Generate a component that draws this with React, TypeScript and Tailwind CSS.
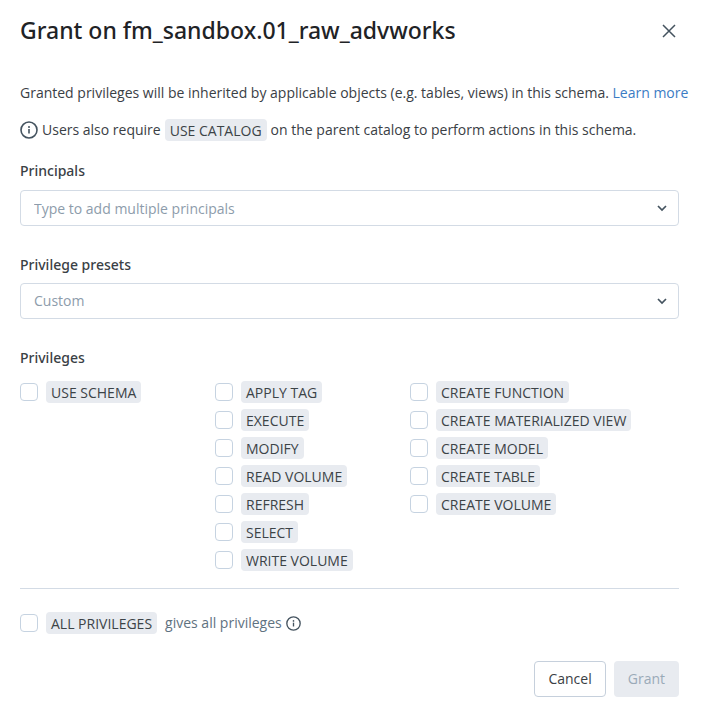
import { useState } from "react";
import type { ReactNode } from "react";

const COLUMNS: string[][] = [
  ["USE SCHEMA"],
  ["APPLY TAG", "EXECUTE", "MODIFY", "READ VOLUME", "REFRESH", "SELECT", "WRITE VOLUME"],
  ["CREATE FUNCTION", "CREATE MATERIALIZED VIEW", "CREATE MODEL", "CREATE TABLE", "CREATE VOLUME"],
];

function InfoIcon({ className }: { className: string }) {
  return (
    <svg viewBox="0 0 18 18" fill="none" className={className} aria-hidden="true">
      <circle cx="9" cy="9" r="8" stroke="currentColor" strokeWidth="1.6" />
      <path d="M9 8v4.6" stroke="currentColor" strokeWidth="1.6" />
      <circle cx="9" cy="5.9" r="1" fill="currentColor" />
    </svg>
  );
}

function ChevronIcon() {
  return (
    <svg viewBox="0 0 10 10" fill="none" className="size-[10px]" aria-hidden="true">
      <path d="M1 3l4 4 4-4" stroke="currentColor" strokeWidth="1.7" />
    </svg>
  );
}

function Tag({ children }: { children: ReactNode }) {
  return (
    <span className="inline-block h-[22px] rounded-[4px] bg-[#e8ebf0] px-[5px] leading-6 whitespace-nowrap text-[#3c4347]">
      {children}
    </span>
  );
}

function Privilege({ name, children }: { name: string; children?: ReactNode }) {
  return (
    <label className="flex h-[22px] items-center gap-2">
      <input
        type="checkbox"
        className="size-[18px] shrink-0 appearance-none rounded-[4px] border border-[#c6d3e1] bg-white checked:bg-[#2272b4]"
      />
      <Tag>{name}</Tag>
      {children}
    </label>
  );
}

export default function App() {
  const [principals, setPrincipals] = useState("");
  return (
    <main className="flex flex-col bg-white pt-3 pr-[23px] pb-6 pl-5 font-['Open_Sans','Noto_Sans',sans-serif] text-sm leading-5 text-[#3a4045]">
      <header className="flex items-center justify-between">
        <h1 className="font-['Noto_Sans',sans-serif] text-[23px] leading-9 font-medium text-[#1f2326]">
          Grant on fm_sandbox.01_raw_advworks
        </h1>
        <button type="button" aria-label="Close" className="flex size-5 items-end justify-center pb-[2px] text-[#44535f]">
          <svg viewBox="0 0 14 14" fill="none" className="size-[14px]" aria-hidden="true">
            <path d="M1 1l12 12M13 1L1 13" stroke="currentColor" strokeWidth="1.5" />
          </svg>
        </button>
      </header>

      <p className="mt-[35px] -mr-4">
        Granted privileges will be inherited by applicable objects (e.g. tables, views) in this schema.{" "}
        <a href="#learn-more" className="text-[#3b7cc4]">Learn more</a>
      </p>

      <div className="mt-[15px] flex h-6 items-center gap-1">
        <InfoIcon className="size-[18px] shrink-0 text-[#44535f]" />
        <p className="flex items-center gap-1">
          Users also require <Tag>USE CATALOG</Tag> on the parent catalog to perform actions in this schema.
        </p>
      </div>

      <label htmlFor="principals" className="mt-[19px] font-['Noto_Sans',sans-serif] font-medium">Principals</label>
      <div className="mt-[9px] flex h-9 items-center rounded-[4px] border border-[#d3dbe5] pr-[11px]">
        <input
          id="principals"
          value={principals}
          onChange={(e) => setPrincipals(e.target.value)}
          placeholder="Type to add multiple principals"
          className="h-full min-w-0 flex-1 bg-transparent pl-[13px] outline-none placeholder:text-[#8d9cab]"
        />
        <button type="button" aria-label="Show principals" className="text-[#44535f]">
          <ChevronIcon />
        </button>
      </div>

      <label htmlFor="presets" className="mt-[29px] font-['Noto_Sans',sans-serif] font-medium">Privilege presets</label>
      <div className="relative mt-[8px]">
        <select
          id="presets"
          className="h-9 w-full appearance-none rounded-[4px] border border-[#d3dbe5] bg-white px-[13px] text-[#8d9cab] outline-none"
        >
          <option>Custom</option>
        </select>
        <span className="pointer-events-none absolute inset-y-0 right-3 flex items-center text-[#44535f]">
          <ChevronIcon />
        </span>
      </div>

      <fieldset className="mt-[29px]">
        <legend className="font-['Noto_Sans',sans-serif] font-medium">Privileges</legend>
        <div className="mt-[13px] grid grid-cols-[195px_195px_1fr]">
          {COLUMNS.map((names) => (
            <div key={names[0]} className="flex flex-col gap-[6px]">
              {names.map((name) => (
                <Privilege key={name} name={name} />
              ))}
            </div>
          ))}
        </div>
        <hr className="mt-[17px] border-[#d3dbe5]" />
        <div className="mt-[23px] flex items-center gap-1">
          <Privilege name="ALL PRIVILEGES">
            <span className="text-[#5f7281]">gives all privileges</span>
          </Privilege>
          <InfoIcon className="size-[15px] text-[#44535f]" />
        </div>
      </fieldset>

      <footer className="mt-[27px] flex justify-end gap-2">
        <button type="button" className="h-9 rounded-[4px] border border-[#c6d0dc] px-[13px]">Cancel</button>
        <button type="button" disabled className="h-9 rounded-[4px] bg-[#e8ebf0] px-[14px] text-[#9aaab8]">Grant</button>
      </footer>
    </main>
  );
}
